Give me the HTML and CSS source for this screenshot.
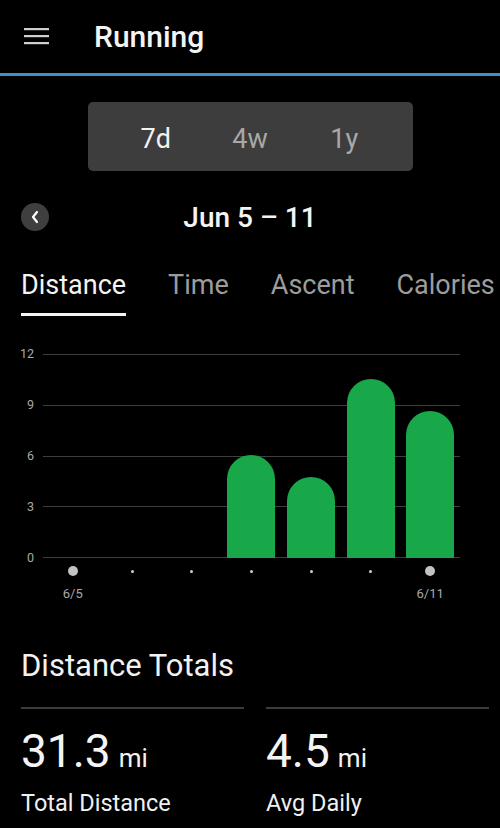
FILE: index.html
```html
<!DOCTYPE html>
<html lang="en">
<head>
    <meta charset="UTF-8">
    <meta name="viewport" content="width=device-width, initial-scale=1.0">
    <title>Running</title>
    <link rel="stylesheet" href="styles.css">
</head>
<body>
    <div class="topbar">
        <svg class="menu" width="26" height="18" viewBox="0 0 26 18">
            <rect x="0" y="0" width="25" height="2.2" fill="#cfcfcf"/>
            <rect x="0" y="7" width="25" height="2.2" fill="#cfcfcf"/>
            <rect x="0" y="14" width="25" height="2.2" fill="#cfcfcf"/>
        </svg>
        <h1>Running</h1>
    </div>

    <div class="range">
        <span class="active">7d</span>
        <span>4w</span>
        <span>1y</span>
    </div>

    <div class="period">
        <span class="back">
            <svg width="10" height="14" viewBox="0 0 10 14">
                <path d="M7 2 L3 7 L7 12" fill="none" stroke="#fff" stroke-width="2.2" stroke-linecap="round" stroke-linejoin="round"/>
            </svg>
        </span>
        <span class="period-label">Jun 5 – 11</span>
    </div>

    <div class="tabs">
        <span class="tab active">Distance</span>
        <span class="tab">Time</span>
        <span class="tab">Ascent</span>
        <span class="tab">Calories</span>
    </div>

    <div class="chart">
        <div class="y-axis">
            <span>12</span>
            <span>9</span>
            <span>6</span>
            <span>3</span>
            <span>0</span>
        </div>
        <div class="plot">
            <div class="lines">
                <i></i><i></i><i></i><i></i><i></i>
            </div>
            <div class="bars">
                <div class="col"></div>
                <div class="col"></div>
                <div class="col"></div>
                <div class="col"><div class="bar" style="height: 103px"></div></div>
                <div class="col"><div class="bar" style="height: 81px"></div></div>
                <div class="col"><div class="bar" style="height: 179px"></div></div>
                <div class="col"><div class="bar" style="height: 147px"></div></div>
            </div>
        </div>
    </div>

    <div class="x-axis">
        <div class="day"><span class="dot big"></span><span class="day-label">6/5</span></div>
        <div class="day"><span class="dot"></span></div>
        <div class="day"><span class="dot"></span></div>
        <div class="day"><span class="dot"></span></div>
        <div class="day"><span class="dot"></span></div>
        <div class="day"><span class="dot"></span></div>
        <div class="day"><span class="dot big"></span><span class="day-label">6/11</span></div>
    </div>

    <h2 class="section-title">Distance Totals</h2>

    <div class="totals">
        <div class="stat">
            <div class="value">31.3<small>mi</small></div>
            <div class="label">Total Distance</div>
        </div>
        <div class="stat">
            <div class="value">4.5<small>mi</small></div>
            <div class="label">Avg Daily</div>
        </div>
    </div>
</body>
</html>
```

FILE: styles.css
```css
body { margin: 0; background: #000; color: #f2f2f2; font-family: Roboto, "Noto Sans", sans-serif; overflow: hidden; }

.topbar { height: 73px; display: flex; align-items: center; border-bottom: 3px solid #3a8fd2; }
.menu { margin-left: 24px; margin-right: 44px; }
.topbar h1 { margin: 0; font-size: 30px; font-weight: 500; color: #f4f4f4; }

.range { width: 283px; margin: 26px auto 0; padding: 4px 21px 0; height: 65px; background: #3d3d3d; border-radius: 5px; display: flex; align-items: center; }
.range span { flex: 1; text-align: center; font-size: 27px; color: #a8a8a8; }
.range .active { color: #f2f2f2; }

.period { display: flex; align-items: center; margin-top: 32px; padding-left: 21px; height: 28px; }
.back { width: 28px; height: 28px; border-radius: 50%; background: #3f3f3f; display: flex; align-items: center; justify-content: center; }
.period-label { flex: 1; text-align: center; margin-right: 49px; font-size: 28px; font-weight: 500; color: #f4f4f4; }

.tabs { display: flex; gap: 42px; padding-left: 21px; margin-top: 38px; white-space: nowrap; }
.tab { font-size: 27px; color: #9c9c9c; padding-bottom: 12px; }
.tab.active { color: #f4f4f4; border-bottom: 3px solid #f4f4f4; }

.chart { display: flex; margin-top: 38px; }
.y-axis { width: 34px; padding-right: 9px; height: 218px; margin: -7px 0; display: flex; flex-direction: column; justify-content: space-between; align-items: flex-end; }
.y-axis span { font-size: 12.5px; line-height: 14px; color: #a8a8a8; }
.plot { width: 417px; height: 204px; display: grid; }
.lines { grid-area: 1 / 1; display: flex; flex-direction: column; justify-content: space-between; }
.lines i { display: block; height: 1px; background: #3e3e3e; }
.bars { grid-area: 1 / 1; display: grid; grid-template-columns: repeat(7, 1fr); align-items: end; }
.col { display: flex; justify-content: center; align-items: flex-end; height: 100%; }
.bar { width: 48px; background: #18a849; border-radius: 24px 24px 0 0; }

.x-axis { margin-left: 43px; width: 417px; display: grid; grid-template-columns: repeat(7, 1fr); margin-top: 8px; }
.day { display: flex; flex-direction: column; align-items: center; }
.dot { flex-shrink: 0; width: 3px; height: 3px; border-radius: 50%; background: #cfcfcf; margin-top: 4px; }
.dot.big { width: 10px; height: 10px; background: #c2c2c2; margin-top: 0; }
.day-label { margin-top: 9px; font-size: 13px; line-height: 18px; color: #a8a8a8; }

.section-title { margin: 44px 0 0 21px; font-size: 31px; font-weight: 400; color: #f2f2f2; }

.totals { display: grid; grid-template-columns: 1fr 1fr; gap: 22px; padding: 0 11px 0 21px; margin-top: 23px; }
.stat { border-top: 2px solid #3c3c3c; }
.value { font-size: 46px; margin-top: 17px; line-height: 1.1; color: #f4f4f4; }
.value small { font-size: 26px; margin-left: 8px; }
.label { font-size: 23.5px; margin-top: 12px; color: #f0f0f0; }
```
